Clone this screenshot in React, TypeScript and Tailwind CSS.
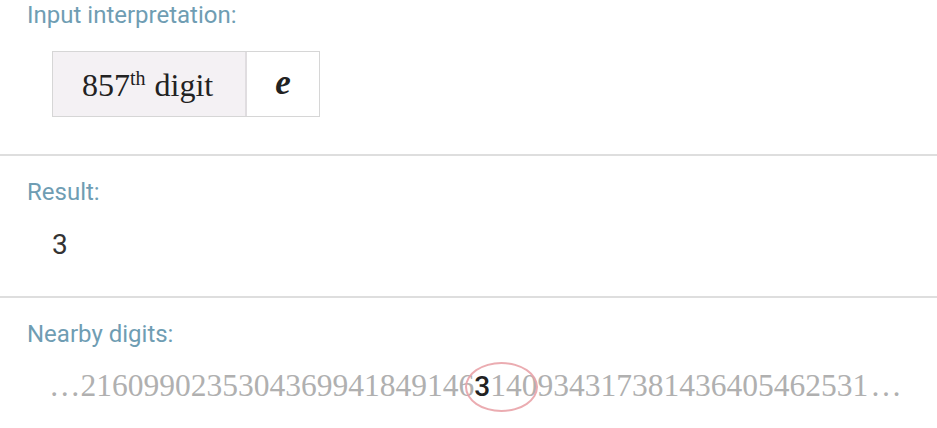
import React from 'react'

const before = '2160990235304369941849146'
const after = '140934317381436405462531'

function PodTitle({ children }: { children: React.ReactNode }) {
  return (
    <p className="text-[24px] leading-[28px] text-[#6f9db3] font-['Roboto',sans-serif] pl-[27px]">
      {children}
    </p>
  )
}

export default function App() {
  return (
    <main className="w-[937px] h-[428px] bg-white overflow-hidden">
      <section className="h-[154px] pt-px">
        <PodTitle>Input interpretation:</PodTitle>
        <div className="mt-[22px] ml-[52px] flex w-[268px] h-[66px] border border-[#d6d6d6] font-['Liberation_Serif',serif] text-[#222]">
          <div className="w-[194px] bg-[#f4f1f4] border-r-2 border-[#e0dde0] pl-[29px] pt-[15px] text-[32px] leading-[36px] whitespace-nowrap">
            857<sup className="text-[20px] relative -top-[11px] mr-[1px]">th</sup> digit
          </div>
          <div className="flex-1 flex justify-center pt-[13px] text-[35px] leading-[36px] italic font-bold">
            e
          </div>
        </div>
      </section>

      <div className="h-[2px] bg-[#dedede]" />

      <section className="h-[140px] pt-[22px]">
        <PodTitle>Result:</PodTitle>
        <p className="mt-[23px] pl-[52px] text-[28px] leading-[32px] text-[#333] font-['Roboto',sans-serif]">
          3
        </p>
      </section>

      <div className="h-[2px] bg-[#dedede]" />

      <section className="pt-[22px]">
        <PodTitle>Nearby digits:</PodTitle>
        <p className="mt-[20px] pl-[49px] text-[31.5px] leading-[36px] text-[#b0b0b0] font-['Liberation_Serif',serif] whitespace-nowrap">
          …{before}
          <span className="relative font-medium text-[#222] font-['Roboto',sans-serif] text-[28px]">
            3
            <span className="absolute left-[-9px] top-[-8px] w-[73px] h-[50px] rounded-[50%] border-2 border-[#e9a3a8]/90" />
          </span>
          {after}
          <span className="ml-[2px]">…</span>
        </p>
      </section>
    </main>
  )
}
